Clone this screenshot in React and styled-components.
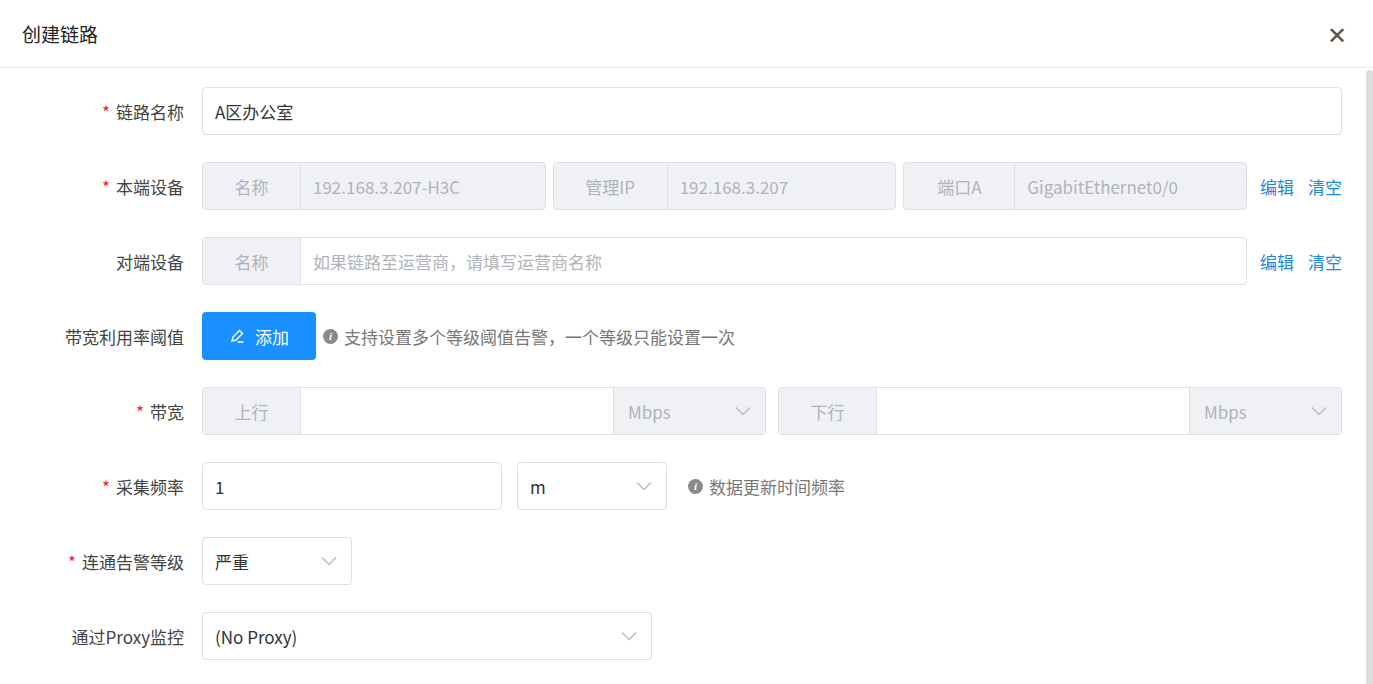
import React from 'react';
import styled, { createGlobalStyle } from 'styled-components';

const Global = createGlobalStyle`
  body { margin: 0; background: #fff; font-family: "Noto Sans CJK SC", "Noto Sans", sans-serif; color: #333; }
`;

const Dialog = styled.div`
  width: 1373px;
  height: 684px;
  display: flex;
  flex-direction: column;
  overflow: hidden;
`;

const Header = styled.div`
  height: 67px;
  flex: none;
  display: flex;
  align-items: center;
  justify-content: space-between;
  padding: 0 26px 0 22px;
  border-bottom: 1px solid #e8e8e8;
  font-size: 19px;
  color: #222;
`;

const Close = styled.span`
  font-size: 24px;
  color: #555;
  font-weight: 300;
`;

const Body = styled.div`
  flex: 1;
  display: flex;
`;

const Form = styled.div`
  flex: 1;
  padding: 19px 24px 0 0;
  display: flex;
  flex-direction: column;
  gap: 27px;
`;

const Scrollbar = styled.div`
  width: 7px;
  background: #dcdcdc;
  border-radius: 3px 3px 0 0;
  margin-top: 2px;
`;

const Row = styled.div`
  display: flex;
  align-items: center;
  height: 48px;
  font-size: 17px;
`;

const Label = styled.div`
  width: 184px;
  flex: none;
  text-align: right;
  padding-right: 18px;
  color: #444;
  & > b { color: #f5222d; font-weight: normal; margin-right: 6px; }
`;

const Box = styled.div`
  height: 48px;
  box-sizing: border-box;
  border: 1px solid #dcdfe6;
  border-radius: 4px;
  display: flex;
  align-items: center;
  background: ${p => (p.$disabled ? '#f0f1f5' : '#fff')};
  width: ${p => p.$w || 'auto'};
  flex: ${p => (p.$w ? 'none' : 1)};
  overflow: hidden;
`;

const Prefix = styled.div`
  width: ${p => p.$w}px;
  height: 100%;
  flex: none;
  display: flex;
  align-items: center;
  justify-content: center;
  background: #f0f1f5;
  border-right: 1px solid #dcdfe6;
  color: #b0b3b9;
`;

const Value = styled.div`
  flex: 1;
  padding: 0 12px;
  color: ${p => (p.$muted ? '#b0b3b9' : '#333')};
  white-space: nowrap;
`;

const Unit = styled.div`
  width: 152px;
  height: 100%;
  flex: none;
  display: flex;
  align-items: center;
  justify-content: space-between;
  padding: 0 14px;
  box-sizing: border-box;
  background: #f0f1f5;
  border-left: 1px solid #dcdfe6;
  color: #b0b3b9;
`;

const Select = styled(Box)`
  justify-content: space-between;
  padding: 0 14px 0 12px;
`;

const Links = styled.div`
  display: flex;
  gap: 14px;
  margin-left: 13px;
  color: #1e88e5;
`;

const Gap = styled.div`
  display: flex;
  gap: ${p => p.$g}px;
  flex: 1;
`;

const AddButton = styled.button`
  height: 48px;
  width: 114px;
  border: none;
  border-radius: 4px;
  background: #1890ff;
  color: #fff;
  font: inherit;
  display: flex;
  align-items: center;
  justify-content: center;
  gap: 10px;
`;

const Hint = styled.div`
  display: flex;
  align-items: center;
  gap: 6px;
  color: #777;
  margin-left: ${p => p.$ml}px;
`;

const InfoDot = styled.span`
  width: 15px;
  height: 15px;
  border-radius: 50%;
  background: #8a8a8a;
  color: #fff;
  font-size: 11px;
  font-style: italic;
  font-weight: bold;
  display: inline-flex;
  align-items: center;
  justify-content: center;
  font-family: "Liberation Serif", serif;
`;

const Chevron = () => (
  <svg width="16" height="10" viewBox="0 0 16 10" fill="none" stroke="#b8bbc1" strokeWidth="1.4">
    <path d="M1 1.5l7 7 7-7" />
  </svg>
);

const Pen = () => (
  <svg width="16" height="16" viewBox="0 0 16 16" fill="none" stroke="#fff" strokeWidth="1.4">
    <path d="M3 13l1-4 6.5-6.5 3 3L7 12z M8.5 14h6" />
  </svg>
);

const Req = ({ children }) => (
  <Label><b>*</b>{children}</Label>
);

export default function App() {
  return (
    <Dialog>
      <Global />
      <Header>创建链路<Close>✕</Close></Header>
      <Body>
        <Form>
          <Row>
            <Req>链路名称</Req>
            <Box><Value>A区办公室</Value></Box>
          </Row>
          <Row>
            <Req>本端设备</Req>
            <Gap $g={7}>
              <Box $disabled><Prefix $w={97}>名称</Prefix><Value $muted>192.168.3.207-H3C</Value></Box>
              <Box $disabled><Prefix $w={113}>管理IP</Prefix><Value $muted>192.168.3.207</Value></Box>
              <Box $disabled><Prefix $w={110}>端口A</Prefix><Value $muted>GigabitEthernet0/0</Value></Box>
            </Gap>
            <Links><span>编辑</span><span>清空</span></Links>
          </Row>
          <Row>
            <Label>对端设备</Label>
            <Box><Prefix $w={97}>名称</Prefix><Value $muted>如果链路至运营商，请填写运营商名称</Value></Box>
            <Links><span>编辑</span><span>清空</span></Links>
          </Row>
          <Row>
            <Label>带宽利用率阈值</Label>
            <AddButton><Pen />添加</AddButton>
            <Hint $ml={7}><InfoDot>i</InfoDot>支持设置多个等级阈值告警，一个等级只能设置一次</Hint>
          </Row>
          <Row>
            <Req>带宽</Req>
            <Gap $g={12}>
              <Box><Prefix $w={97}>上行</Prefix><Value /><Unit>Mbps<Chevron /></Unit></Box>
              <Box><Prefix $w={97}>下行</Prefix><Value /><Unit>Mbps<Chevron /></Unit></Box>
            </Gap>
          </Row>
          <Row>
            <Req>采集频率</Req>
            <Box $w="300px"><Value>1</Value></Box>
            <Select $w="150px" style={{ marginLeft: 15 }}>m<Chevron /></Select>
            <Hint $ml={21}><InfoDot>i</InfoDot>数据更新时间频率</Hint>
          </Row>
          <Row>
            <Req>连通告警等级</Req>
            <Select $w="150px">严重<Chevron /></Select>
          </Row>
          <Row>
            <Label>通过Proxy监控</Label>
            <Select $w="450px">(No Proxy)<Chevron /></Select>
          </Row>
        </Form>
        <Scrollbar />
      </Body>
    </Dialog>
  );
}
